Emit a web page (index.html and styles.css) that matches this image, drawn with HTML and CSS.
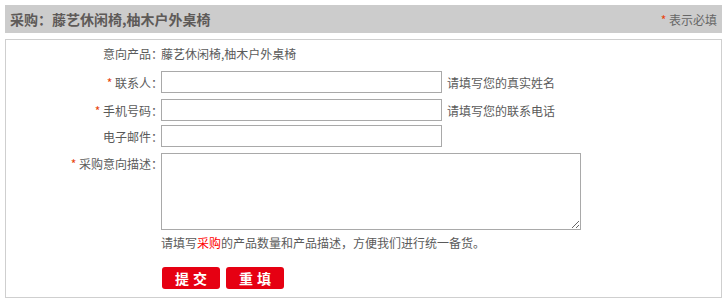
FILE: index.html
```html
<!DOCTYPE html>
<html lang="zh-CN">
<head>
  <meta charset="UTF-8" />
  <title>采购询价</title>
  <link rel="stylesheet" href="styles.css">
</head>
<body>

  <!-- Title bar -->
  <div class="title-bar">
    <h2>采购：藤艺休闲椅,柚木户外桌椅</h2>
    <span class="tip"><em>*</em> 表示必填</span>
  </div>

  <!-- Inquiry form -->
  <form class="inquiry" id="inquiryForm">
    <div class="row row-product">
      <label>意向产品：</label>
      <span class="value">藤艺休闲椅,柚木户外桌椅</span>
    </div>

    <div class="row row-name">
      <label for="name"><em>*</em> 联系人：</label>
      <input type="text" id="name" />
      <span class="hint">请填写您的真实姓名</span>
    </div>

    <div class="row row-phone">
      <label for="phone"><em>*</em> 手机号码：</label>
      <input type="text" id="phone" />
      <span class="hint">请填写您的联系电话</span>
    </div>

    <div class="row row-email">
      <label for="email">电子邮件：</label>
      <input type="text" id="email" />
    </div>

    <div class="row row-desc">
      <label for="desc"><em>*</em> 采购意向描述：</label>
      <textarea id="desc"></textarea>
    </div>

    <p class="desc-hint">请填写<b>采购</b>的产品数量和产品描述，方便我们进行统一备货。</p>

    <div class="actions">
      <button type="submit" class="btn">提交</button>
      <button type="reset" class="btn">重填</button>
    </div>
  </form>

</body>
</html>
```

FILE: styles.css
```css
:root {
  --text: #5a5a5a;
  --star: #e8440c;
  --red: #e60012;
  --bar: #cccccc;
  --line: #cfcfcf;
  --field: #a9a9a9;
}

* {
  box-sizing: border-box;
  margin: 0;
  padding: 0;
}

body {
  margin: 5px;
  width: 717px;
  font-family: "Microsoft YaHei", "Noto Sans CJK SC", sans-serif;
  font-size: 12px;
  color: var(--text);
  background: #fff;
}

em {
  font-style: normal;
  color: var(--star);
}

/* Title bar */
.title-bar {
  display: flex;
  align-items: center;
  justify-content: space-between;
  height: 28px;
  padding: 0 5px 0 5px;
  background: var(--bar);
}

.title-bar h2 {
  font-size: 14px;
  font-weight: bold;
  color: #5e5a58;
}

.title-bar .tip {
  font-size: 12px;
  color: #666;
}

/* Form box */
.inquiry {
  margin-top: 6px;
  height: 259px;
  border: 1px solid var(--line);
  padding-top: 3px;
}

.row {
  display: flex;
  align-items: center;
}

.row label {
  width: 157px;
  flex-shrink: 0;
  text-align: right;
  margin-right: -2px;
  white-space: nowrap;
}

.row-product {
  height: 20px;
}

.row-name {
  margin-top: 8px;
}

.row-phone {
  margin-top: 6px;
}

.row-email {
  margin-top: 4px;
}

.row-desc {
  margin-top: 6px;
  align-items: flex-start;
}

.row-desc label {
  padding-top: 2px;
}

.row input {
  width: 281px;
  height: 22px;
  border: 1px solid var(--field);
  font: inherit;
  padding: 0 3px;
}

.row textarea {
  width: 420px;
  height: 77px;
  border: 1px solid var(--field);
  font: inherit;
  padding: 2px 3px;
}

.hint {
  margin-left: 5px;
}

.desc-hint {
  margin: 4px 0 0 155px;
  line-height: 18px;
}

.desc-hint b {
  font-weight: normal;
  color: #ff0000;
}

.actions {
  display: flex;
  gap: 6px;
  margin: 15px 0 0 156px;
}

.btn {
  width: 58px;
  height: 22px;
  border: none;
  border-radius: 3px;
  background: var(--red);
  color: #fff;
  font-family: "SimSun", "Noto Sans CJK SC", sans-serif;
  font-size: 14px;
  font-weight: bold;
  letter-spacing: 4px;
  text-indent: 4px;
  cursor: pointer;
}
```
